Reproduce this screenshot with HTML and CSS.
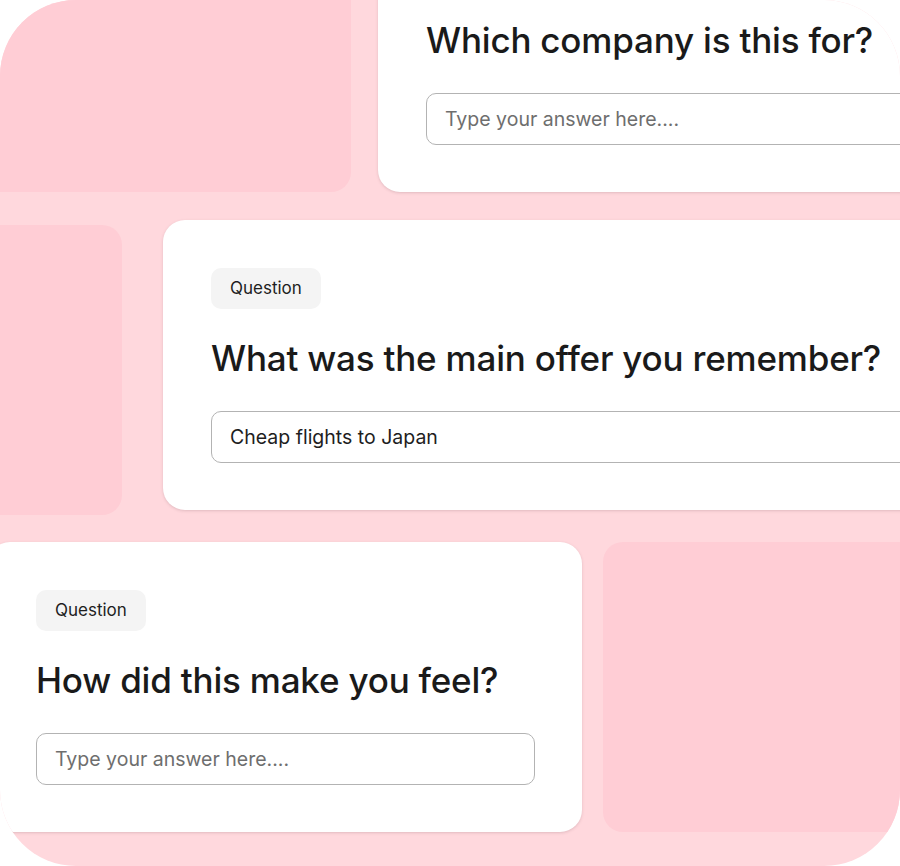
FILE: index.html
```html
<!DOCTYPE html>
<html lang="en">
<head>
<meta charset="utf-8">
<title>Survey questions</title>
<link rel="stylesheet" href="styles.css">
</head>
<body>
<div class="canvas">
  <div class="row row-1">
    <div class="block block-1"></div>
    <div class="card card-1">
      <h2 class="title">Which company is this for?</h2>
      <div class="field placeholder">Type your answer here....</div>
    </div>
  </div>
  <div class="row row-2">
    <div class="block block-2"></div>
    <div class="card card-2">
      <span class="badge">Question</span>
      <h2 class="title">What was the main offer you remember?</h2>
      <div class="field">Cheap flights to Japan</div>
    </div>
  </div>
  <div class="row row-3">
    <div class="card card-3">
      <span class="badge">Question</span>
      <h2 class="title">How did this make you feel?</h2>
      <div class="field placeholder">Type your answer here....</div>
    </div>
    <div class="block block-3"></div>
  </div>
</div>
</body>
</html>
```

FILE: styles.css
```css
* { box-sizing: border-box; }

html, body {
  margin: 0;
  padding: 0;
  background: #ffffff;
}

body {
  font-family: Inter, "Liberation Sans", sans-serif;
  color: #1a1a1a;
}

.canvas {
  width: 900px;
  height: 866px;
  background: #ffd8dd;
  border-radius: 76px;
  overflow: hidden;
  display: flex;
  flex-direction: column;
}

.row {
  display: flex;
  flex-shrink: 0;
  height: 290px;
}

.row-1 {
  margin-top: -98px;
  margin-left: -200px;
  gap: 27px;
}

.row-2 {
  margin-top: 28px;
  margin-left: -200px;
  gap: 41px;
}

.row-3 {
  margin-top: 32px;
  margin-left: -12px;
  gap: 21px;
}

.block {
  flex-shrink: 0;
  height: 290px;
  background: #ffcdd5;
  border-radius: 20px;
}

.block-1 { width: 551px; }
.block-2 { width: 322px; margin-top: 5px; }
.block-3 { width: 400px; }

.card {
  flex-shrink: 0;
  height: 290px;
  background: #ffffff;
  border-radius: 22px;
  padding: 48px 47px 47px 48px;
  box-shadow: 0 1px 3px rgba(120, 80, 90, 0.22);
  display: flex;
  flex-direction: column;
  align-items: flex-start;
}

.card-1 { width: 620px; padding-top: 89px; }
.card-2 { width: 800px; }
.card-3 { width: 594px; }

.badge {
  display: inline-block;
  height: 41px;
  line-height: 41px;
  padding: 0 19px;
  background: #f4f4f4;
  border-radius: 10px;
  font-size: 17px;
  color: #1e1e1e;
}

.title {
  margin: 28px 0 32px;
  font-size: 35px;
  line-height: 42px;
  font-weight: 500;
  letter-spacing: -0.2px;
  color: #1a1a1a;
  white-space: nowrap;
}

.field {
  align-self: stretch;
  height: 52px;
  border: 1px solid #b3b3b3;
  border-radius: 10px;
  padding: 0 18px;
  display: flex;
  align-items: center;
  font-size: 19.5px;
  color: #1e1e1e;
}

.card-1 .field,
.card-2 .field {
  margin-right: -200px;
}

.placeholder {
  color: #6e6e6e;
}
```
